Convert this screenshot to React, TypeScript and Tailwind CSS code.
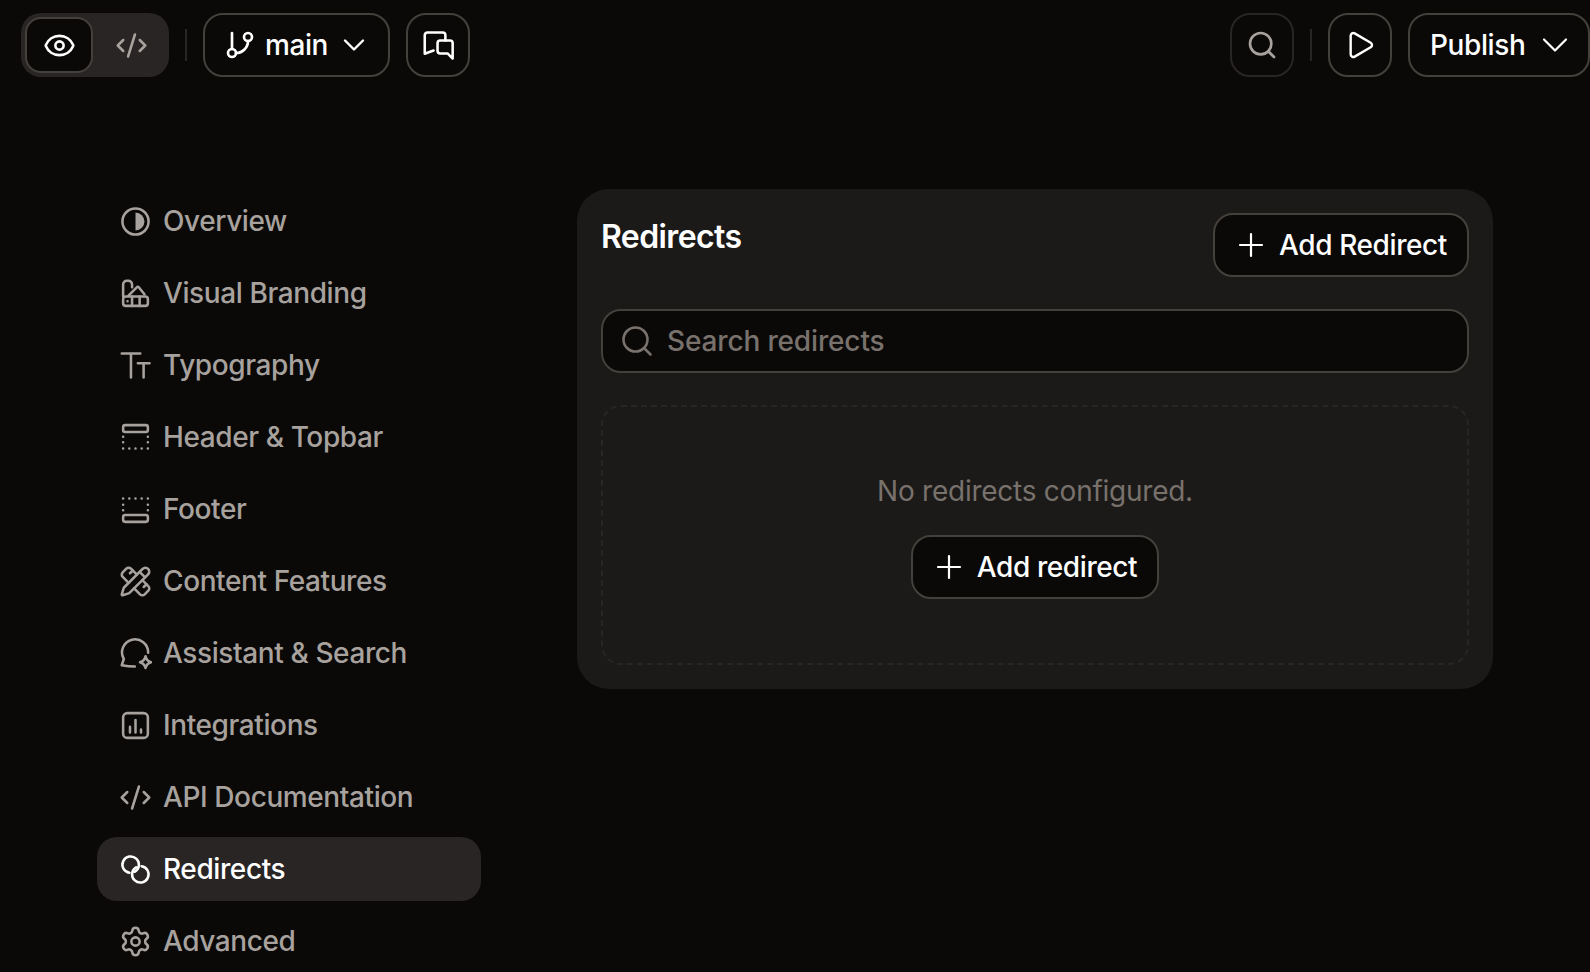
import {
  ChevronDown,
  CodeXml,
  Eye,
  GitBranch,
  PencilRuler,
  Play,
  Search,
  Settings,
} from "lucide-react";

type IconProps = { className?: string; strokeWidth?: number };

function Svg({ className, children }: IconProps & { children: React.ReactNode }) {
  return (
    <svg viewBox="0 0 24 24" fill="none" stroke="currentColor" strokeWidth="1.85" strokeLinecap="round" strokeLinejoin="round" className={className}>
      {children}
    </svg>
  );
}

function OverviewIcon(props: IconProps) {
  return (
    <Svg {...props}>
      <circle cx="12" cy="12" r="9.5" />
      <path d="M12 5.5a6.5 6.5 0 0 1 0 13z" fill="currentColor" stroke="none" />
    </Svg>
  );
}

function BrandingIcon(props: IconProps) {
  return (
    <Svg {...props}>
      <path d="M3 14.2V5.5a2.7 2.7 0 0 1 2.700-2.700h1.100a2.700 2.700 0 0 1 2.700 2.700V7.500" />
      <path d="M6.900 13.500l6-6a1 1 0 0 1 1.500 0l4.100 5" />
      <rect x="3" y="14.200" width="18" height="6.800" rx="2" />
      <path d="M9.500 14.200v6.800M15 14.200v6.800M6.200 17.600v.01" />
    </Svg>
  );
}

function TypeIcon(props: IconProps) {
  return (
    <Svg {...props}>
      <path d="M2 3.300h13.500M8.700 3.300v17.400" />
      <path d="M13.700 10.300h8.500M17.900 10.300v10.400" />
    </Svg>
  );
}

function HeaderIcon(props: IconProps) {
  return (
    <Svg {...props}>
      <rect x="3" y="3" width="18" height="5" rx="1.500" />
      <path d="M3 11.500v.01M3 15.500v.01M3 20v.01M21 11.500v.01M21 15.500v.01M21 20v.01M7.500 20v.01M12 20v.01M16.500 20v.01" />
    </Svg>
  );
}

function FooterIcon(props: IconProps) {
  return (
    <Svg {...props}>
      <rect x="3" y="16" width="18" height="5" rx="1.500" />
      <path d="M3 12.500v.01M3 8.500v.01M3 4v.01M21 12.500v.01M21 8.500v.01M21 4v.01M7.500 4v.01M12 4v.01M16.500 4v.01" />
    </Svg>
  );
}

function AssistantIcon(props: IconProps) {
  return (
    <Svg {...props}>
      <path d="M21.200 11.500A9.500 9.500 0 1 0 3.500 16L2 20.500c3 .6 6.500 1 9.500 1" />
      <path d="M19.300 14c.5 2.500 1.500 3.600 4 4.300-2.500.7-3.500 1.800-4 4.300-.5-2.500-1.500-3.600-4-4.300 2.500-.7 3.500-1.800 4-4.300z" />
    </Svg>
  );
}

function ChartIcon(props: IconProps) {
  return (
    <Svg {...props}>
      <rect x="3" y="3" width="18" height="18" rx="3" />
      <path d="M8 17v-4M12 17V8M16 17v-2" />
    </Svg>
  );
}

function LinkRingsIcon(props: IconProps) {
  return (
    <Svg {...props}>
      <path d="M7.560 14.430A6 6 0 1 1 11.600 13.640" />
      <path d="M16.440 9.570A6 6 0 1 1 12.410 10.360" />
    </Svg>
  );
}

function ChatsIcon(props: IconProps) {
  return (
    <Svg {...props}>
      <path d="M17 8.400V4.500a2 2 0 0 0-2-2H4a2 2 0 0 0-2 2V18l6.400-2.400" />
      <path d="M11.300 10.400a2 2 0 0 1 2-2h7a2 2 0 0 1 2 2v11.100l-3.700-3.700h-5.300a2 2 0 0 1-2-2z" />
    </Svg>
  );
}

function PlusIcon({ className }: IconProps) {
  return (
    <svg viewBox="0 0 28 28" fill="none" stroke="currentColor" strokeWidth="2.2" strokeLinecap="round" className={className}>
      <path d="M3 14h22M14 3v22" />
    </svg>
  );
}

const navItems = [
  { label: "Overview", icon: OverviewIcon },
  { label: "Visual Branding", icon: BrandingIcon },
  { label: "Typography", icon: TypeIcon },
  { label: "Header & Topbar", icon: HeaderIcon },
  { label: "Footer", icon: FooterIcon },
  { label: "Content Features", icon: PencilRuler },
  { label: "Assistant & Search", icon: AssistantIcon },
  { label: "Integrations", icon: ChartIcon },
  { label: "API Documentation", icon: CodeXml },
  { label: "Redirects", icon: LinkRingsIcon, active: true },
  { label: "Advanced", icon: Settings },
];

function Topbar() {
  return (
    <header className="flex h-[90px] shrink-0 items-start justify-between pt-[13px] pl-[21px]">
      <div className="flex items-center">
        <div className="flex h-16 w-[148px] items-center rounded-[20px] bg-[#292524] pl-[4px]">
          <button className="flex h-14 w-[68px] items-center justify-center rounded-2xl border-2 border-[#44403c] bg-[#0a0908] text-white">
            <Eye size={33} strokeWidth={1.9} />
          </button>
          <span className="flex w-[76px] justify-center text-[#a8a29e]">
            <CodeXml size={33} strokeWidth={1.85} />
          </span>
        </div>
        <div className="mx-4 h-8 w-0.5 bg-[#292524]" />
        <button className="flex h-16 w-[187px] items-center rounded-[20px] border-2 border-[#44403c] pl-[19px] text-[28px] font-medium text-white">
          <GitBranch size={32} strokeWidth={2} />
          <span className="ml-[9px]">main</span>
          <ChevronDown size={36} strokeWidth={1.6} className="ml-[8px]" />
        </button>
        <button className="ml-4 flex h-16 w-16 items-center justify-center rounded-[20px] border-2 border-[#44403c] text-white">
          <ChatsIcon className="size-[33px]" />
        </button>
      </div>
      <div className="flex items-center">
        <button className="flex h-16 w-16 items-center justify-center rounded-[20px] border-2 border-[#292524] text-[#a8a29e]">
          <Search size={32} strokeWidth={2} />
        </button>
        <div className="mx-4 h-8 w-0.5 bg-[#292524]" />
        <button className="flex h-16 w-16 items-center justify-center rounded-[20px] border-2 border-[#44403c] text-white">
          <Play size={32} strokeWidth={1.8} />
        </button>
        <button className="ml-4 flex h-16 w-[182px] items-center rounded-[20px] border-2 border-[#44403c] pl-[20px] text-[28px] font-medium text-white">
          Publish
          <ChevronDown size={44} strokeWidth={1.2} className="ml-[8px]" />
        </button>
      </div>
    </header>
  );
}

function Sidebar() {
  return (
    <nav className="flex w-[384px] shrink-0 flex-col gap-2">
      {navItems.map(({ label, icon: Icon, active }) => (
        <a
          key={label}
          className={`flex h-16 shrink-0 items-center gap-[14px] rounded-[20px] pl-6 text-[28px] font-medium ${
            active ? "bg-[#292524] text-white" : "text-[#a8a29e]"
          }`}
        >
          <span className="flex size-7 shrink-0 items-center justify-center">
            <Icon strokeWidth={1.85} className="size-[33px] shrink-0" />
          </span>
          {label}
        </a>
      ))}
    </nav>
  );
}

function AddButton({ label }: { label: string }) {
  return (
    <button className="flex h-16 items-center gap-[14px] rounded-[20px] border-2 border-[#44403c] bg-[#0a0908] pr-5 pl-[22px] text-[28px] font-medium whitespace-nowrap text-white">
      <PlusIcon className="size-7" />
      {label}
    </button>
  );
}

function RedirectsPanel() {
  return (
    <section className="flex w-[916px] flex-col rounded-[32px] bg-[#1b1a18] p-6">
      <div className="flex items-start justify-between">
        <h1 className="mt-1 text-[32px] leading-10 font-semibold tracking-[-0.6px] text-white">Redirects</h1>
        <AddButton label="Add Redirect" />
      </div>
      <div className="mt-8 flex h-16 items-center gap-[12px] rounded-[20px] border-2 border-[#44403c] bg-[#0a0908] pl-4">
        <Search size={36} strokeWidth={1.7} className="text-[#78716c]" />
        <span className="text-[28px] font-medium tracking-[-0.15px] text-[#78716c]">Search redirects</span>
      </div>
      <div className="mt-8 flex h-[260px] flex-col items-center justify-center gap-6 rounded-[20px] border-2 border-dashed border-[#292524]">
        <p className="text-[28px] leading-10 tracking-[-0.25px] text-[#78716c]">No redirects configured.</p>
        <AddButton label="Add redirect" />
      </div>
    </section>
  );
}

export default function App() {
  return (
    <div className="flex h-screen flex-col overflow-hidden bg-[#0a0908] font-['Inter','Noto_Sans',sans-serif] tracking-[-0.4px]">
      <Topbar />
      <main className="flex items-start pt-[99px] pl-[97px]">
        <Sidebar />
        <div className="ml-24">
          <RedirectsPanel />
        </div>
      </main>
    </div>
  );
}
